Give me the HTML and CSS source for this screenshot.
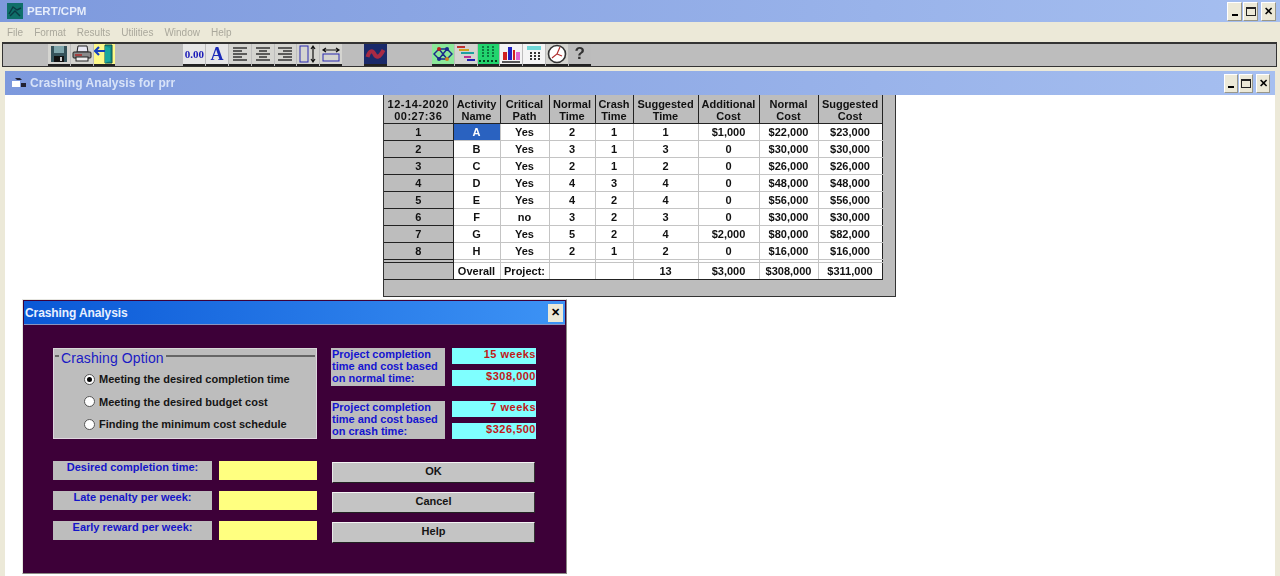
FILE: index.html
```html
<!DOCTYPE html>
<html lang="en">
<head>
  <meta charset="UTF-8">
  <title>PERT/CPM</title>
  <link rel="stylesheet" href="styles.css">
</head>
<body>

  <div class="app-title">
    <svg class="app-icon" viewBox="0 0 16 16"><rect width="16" height="16" fill="#0f6f6a"/><path d="M2 11 6 4l4 3 4-2M3 13l5-5 5 5" fill="none" stroke="#0a3a44" stroke-width="1.4"/></svg>
    <span class="app-name">PERT/CPM</span>
    <div class="win-btns">
      <span class="win-btn"><i class="i-min"></i></span>
      <span class="win-btn"><i class="i-max"></i></span>
      <span class="win-btn win-close">&#10005;</span>
    </div>
  </div>

  <div class="menu">
    <span>File</span><span>Format</span><span>Results</span><span>Utilities</span><span>Window</span><span>Help</span>
  </div>

  <div class="toolbar">
    <div class="tool-group first">
      <span class="tool"><svg viewBox="0 0 20 20"><rect x="2" y="2" width="16" height="16" fill="#35525a"/><rect x="5" y="2" width="10" height="7" fill="#7fa6ac"/><rect x="5" y="12" width="10" height="6" fill="#111"/><rect x="11" y="13" width="2" height="4" fill="#ccc"/></svg></span>
      <span class="tool"><svg viewBox="0 0 20 20"><path d="M6 2h9l1 6H5z" fill="#e8e8f4" stroke="#222"/><rect x="1" y="8" width="18" height="6" rx="1" fill="#8a8a8a" stroke="#222"/><rect x="4" y="13" width="12" height="4" fill="#eee" stroke="#222"/><path d="M3 11h7" stroke="#b02020" stroke-width="1.4"/></svg></span>
      <span class="tool tool-yellow"><svg viewBox="0 0 20 20"><path d="M11 1h7v18h-7z" fill="#12908a" stroke="#0b4f4c"/><path d="M11 2l5 2v13l-5 2z" fill="#1aa79e"/><path d="M1 7h10M5 3 1 7l4 4" fill="none" stroke="#1540c0" stroke-width="2.2"/></svg></span>
    </div>
    <div class="tool-group second">
      <span class="tool tool-num">0.00</span>
      <span class="tool tool-a">A</span>
      <span class="tool"><svg viewBox="0 0 20 20"><path d="M3 4h14M3 7h9M3 10h14M3 13h9M3 16h14" stroke="#333" stroke-width="1.3"/></svg></span>
      <span class="tool"><svg viewBox="0 0 20 20"><path d="M3 4h14M6 7h8M3 10h14M6 13h8M3 16h14" stroke="#333" stroke-width="1.3"/></svg></span>
      <span class="tool"><svg viewBox="0 0 20 20"><path d="M3 4h14M8 7h9M3 10h14M8 13h9M3 16h14" stroke="#333" stroke-width="1.3"/></svg></span>
      <span class="tool"><svg viewBox="0 0 20 20"><rect x="2" y="2" width="8" height="16" fill="none" stroke="#2a2ab0"/><path d="M15 2v16M13 5l2-3 2 3M13 15l2 3 2-3" fill="none" stroke="#111" stroke-width="1.2"/></svg></span>
      <span class="tool"><svg viewBox="0 0 20 20"><rect x="2" y="10" width="16" height="7" fill="none" stroke="#2a2ab0"/><path d="M2 6h16M5 4 2 6l3 2M15 4l3 2-3 2" fill="none" stroke="#111" stroke-width="1.2"/></svg></span>
    </div>
    <div class="tool-group third">
      <span class="tool tool-dark"><svg viewBox="0 0 20 20"><rect width="20" height="20" fill="#1a2a6a"/><path d="M2 13c2-7 5-7 7-3s5 4 9-4" fill="none" stroke="#a82a44" stroke-width="4"/></svg></span>
    </div>
    <div class="tool-group fourth">
      <span class="tool tool-green"><svg viewBox="0 0 20 20"><path d="M1 10 6 5h8l5 5-5 5H6zM6 5l8 10M14 5 6 15" fill="none" stroke="#1a2a8a" stroke-width="1.4"/><circle cx="6" cy="5" r="2" fill="#c02020"/><circle cx="14" cy="15" r="2" fill="#d08020"/><circle cx="14" cy="5" r="2" fill="#1a2a8a"/><circle cx="6" cy="15" r="2" fill="#1a2a8a"/></svg></span>
      <span class="tool"><svg viewBox="0 0 20 20"><path d="M1 3h8" stroke="#c03030" stroke-width="2"/><path d="M3 6h10" stroke="#d0a020" stroke-width="2"/><path d="M5 9h13" stroke="#20a0a0" stroke-width="2"/><path d="M8 13h7" stroke="#c03090" stroke-width="2"/><path d="M11 16h8" stroke="#2020b0" stroke-width="2"/></svg></span>
      <span class="tool tool-bright"><svg viewBox="0 0 20 20"><path d="M5 2v12M10 2v12M15 2v12" stroke="#0c7a40" stroke-width="2" stroke-dasharray="2 1"/><path d="M1 17h18" stroke="#054020" stroke-width="2" stroke-dasharray="2 2"/></svg></span>
      <span class="tool tool-white"><svg viewBox="0 0 20 20"><rect x="2" y="8" width="4" height="8" fill="#d02020"/><rect x="7" y="3" width="4" height="13" fill="#2020c0"/><rect x="12" y="6" width="2" height="10" fill="#d02020"/><rect x="15" y="8" width="4" height="8" fill="#e060d0"/><path d="M1 18h18" stroke="#111" stroke-width="1.4"/></svg></span>
      <span class="tool tool-white"><svg viewBox="0 0 20 20"><rect x="3" y="2" width="14" height="4" fill="#70d8d8"/><path d="M6 9h2M10 9h2M14 9h2M6 12h2M10 12h2M14 12h2M6 15h2M10 15h2M14 15h2" stroke="#333" stroke-width="2"/></svg></span>
      <span class="tool"><svg viewBox="0 0 20 20"><circle cx="10" cy="10" r="8.5" fill="#fff" stroke="#333" stroke-width="1.6"/><path d="M5 14 10 10l3-7M10 10l5 2" fill="none" stroke="#b03030" stroke-width="1.2"/></svg></span>
      <span class="tool tool-q">?</span>
    </div>
  </div>

  <div class="child-title">
    <svg class="child-icon" viewBox="0 0 16 12"><path d="M1 4h8v6H1z" fill="#fff"/><path d="M4 1h5l2 2H6z" fill="#223"/><path d="M10 6h5v4h-5z" fill="#223"/></svg>
    <span class="child-name">Crashing Analysis for prr</span>
    <div class="win-btns child-btns">
      <span class="win-btn"><i class="i-min"></i></span>
      <span class="win-btn"><i class="i-max"></i></span>
      <span class="win-btn win-close">&#10005;</span>
    </div>
  </div>

  <div class="child-body">
    <div class="sheet">
      <table class="grid">
        <colgroup>
          <col class="c0"><col class="c1"><col class="c2"><col class="c3"><col class="c4"><col class="c5"><col class="c6"><col class="c7"><col class="c8">
        </colgroup>
        <thead>
          <tr>
            <th class="stamp">12-14-2020<br>00:27:36</th><th>Activity<br>Name</th><th>Critical<br>Path</th><th>Normal<br>Time</th><th>Crash<br>Time</th><th>Suggested<br>Time</th><th>Additional<br>Cost</th><th>Normal<br>Cost</th><th>Suggested<br>Cost</th>
          </tr>
        </thead>
        <tbody>
          <tr><th>1</th><td class="selected">A</td><td>Yes</td><td>2</td><td>1</td><td>1</td><td>$1,000</td><td>$22,000</td><td>$23,000</td></tr>
          <tr><th>2</th><td>B</td><td>Yes</td><td>3</td><td>1</td><td>3</td><td>0</td><td>$30,000</td><td>$30,000</td></tr>
          <tr><th>3</th><td>C</td><td>Yes</td><td>2</td><td>1</td><td>2</td><td>0</td><td>$26,000</td><td>$26,000</td></tr>
          <tr><th>4</th><td>D</td><td>Yes</td><td>4</td><td>3</td><td>4</td><td>0</td><td>$48,000</td><td>$48,000</td></tr>
          <tr><th>5</th><td>E</td><td>Yes</td><td>4</td><td>2</td><td>4</td><td>0</td><td>$56,000</td><td>$56,000</td></tr>
          <tr><th>6</th><td>F</td><td>no</td><td>3</td><td>2</td><td>3</td><td>0</td><td>$30,000</td><td>$30,000</td></tr>
          <tr><th>7</th><td>G</td><td>Yes</td><td>5</td><td>2</td><td>4</td><td>$2,000</td><td>$80,000</td><td>$82,000</td></tr>
          <tr><th>8</th><td>H</td><td>Yes</td><td>2</td><td>1</td><td>2</td><td>0</td><td>$16,000</td><td>$16,000</td></tr>
          <tr class="spacer"><th></th><td></td><td></td><td></td><td></td><td></td><td></td><td></td><td></td></tr>
          <tr class="total"><th></th><td>Overall</td><td>Project:</td><td></td><td></td><td>13</td><td>$3,000</td><td>$308,000</td><td>$311,000</td></tr>
        </tbody>
      </table>
    </div>
  </div>

  <div class="dialog">
    <div class="dlg-title">
      <span>Crashing Analysis</span>
      <span class="dlg-close">&#10005;</span>
    </div>
    <div class="dlg-body">
      <div class="panel">
        <fieldset class="options">
          <legend>Crashing Option</legend>
          <label class="radio"><i class="dot on"></i>Meeting the desired completion time</label>
          <label class="radio"><i class="dot"></i>Meeting the desired budget cost</label>
          <label class="radio"><i class="dot"></i>Finding the minimum cost schedule</label>
        </fieldset>
      </div>

      <div class="summary">
        <div class="sum-group">
          <div class="sum-label">Project completion time and cost based on normal time:</div>
          <div class="sum-values"><span>15 weeks</span><span>$308,000</span></div>
        </div>
        <div class="sum-group">
          <div class="sum-label">Project completion time and cost based on crash time:</div>
          <div class="sum-values"><span>7 weeks</span><span>$326,500</span></div>
        </div>
      </div>

      <div class="inputs">
        <div class="input-row"><span class="input-label">Desired completion time:</span><span class="input-box"></span></div>
        <div class="input-row"><span class="input-label">Late penalty per week:</span><span class="input-box"></span></div>
        <div class="input-row"><span class="input-label">Early reward per week:</span><span class="input-box"></span></div>
      </div>

      <div class="actions">
        <button>OK</button>
        <button>Cancel</button>
        <button>Help</button>
      </div>
    </div>
  </div>

</body>
</html>
```

FILE: styles.css
```css
* {
  box-sizing: border-box;
}

html, body {
  height: 100%;
}

body {
  margin: 0;
  height: 576px;
  overflow: hidden;
  background: #ece9d8;
  color: #000;
  font-family: "Liberation Sans", Arial, sans-serif;
  font-size: 11px;
  position: relative;
  display: flex;
  flex-direction: column;
  filter: blur(0.35px); /* the reference is a soft capture */
}

/* main window */
.app-title {
  height: 22px;
  background: linear-gradient(to right, #7d99dd, #a6bff0);
  display: flex;
  align-items: center;
  padding-left: 7px;
  flex: none;
}

.app-icon {
  width: 16px;
  height: 16px;
}

.app-name {
  margin-left: 4px;
  color: #e6edfb;
  font-size: 11.5px;
  font-weight: bold;
}

.win-btns {
  margin-left: auto;
  margin-right: 4px;
  display: flex;
  gap: 1px;
}

.win-btn {
  width: 15px;
  height: 19px;
  background: #ece9d8;
  border: 1px solid;
  border-color: #fff #99978a #99978a #fff;
  display: flex;
  align-items: center;
  justify-content: center;
  font-size: 11px;
  font-weight: bold;
  position: relative;
}

.win-close {
  margin-left: 2px;
  font-size: 11px;
}

.i-min {
  width: 6px;
  height: 2px;
  background: #000;
  margin-top: 7px;
}

.i-max {
  width: 10px;
  height: 9px;
  border: 1px solid #222;
  border-top-width: 2px;
}

.menu {
  height: 20px;
  flex: none;
  display: flex;
  align-items: center;
  gap: 11px;
  padding-left: 7px;
  color: #aaa89c;
  font-size: 10px;
}

.toolbar {
  height: 25px;
  flex: none;
  margin: 0 3px 0 2px;
  background: #bdbdbd;
  border: 1px solid #333;
  border-width: 2px 1px 1px 1px;
  display: flex;
  align-items: center;
}

.tool-group {
  display: flex;
  gap: 1px;
}

.first {
  margin-left: 45px;
}

.second {
  margin-left: 68px;
}

.third {
  margin-left: 22px;
}

.fourth {
  margin-left: 45px;
}

.tool {
  width: 21.8px;
  height: 22px;
  background: #d4d4d0;
  border-bottom: 2px solid #222;
  display: flex;
  align-items: center;
  justify-content: center;
  overflow: hidden;
}

.tool svg {
  width: 20px;
  height: 20px;
}

.tool-yellow {
  background: #fdf98a;
}

.tool-num {
  color: #1a1ab8;
  font-family: "Liberation Serif", serif;
  font-size: 11px;
  font-weight: bold;
  background: #e6e6e6;
}

.tool-a {
  color: #1a2ab8;
  font-family: "Liberation Serif", serif;
  font-size: 18px;
  font-weight: bold;
  background: #e6e6e6;
}

.tool-dark {
  width: 23px;
  background: #1a2a6a;
}

.tool-dark svg {
  width: 23px;
  height: 20px;
}

.tool-green {
  background: #8ce89a;
}

.tool-bright {
  background: #22d46e;
}

.tool-white {
  background: #f4f4f4;
}

.tool-q {
  color: #333;
  font-size: 17px;
  font-weight: bold;
  background: #bcbcbc;
}

/* child window */
.child-title {
  height: 24px;
  flex: none;
  margin: 4px 5px 0 5px;
  background: linear-gradient(to right, #7d99dd, #a6bff0);
  display: flex;
  align-items: center;
  padding-left: 6px;
}

.child-icon {
  width: 16px;
  height: 12px;
}

.child-name {
  margin-left: 3px;
  color: #d8e3f8;
  font-size: 12px;
  font-weight: bold;
  letter-spacing: .07px;
}

.child-btns {
  margin-right: 5px;
}

.child-btns .win-btn {
  width: 14px;
}

.child-body {
  flex: 1;
  margin: 0 5px;
  background: #fff;
  padding-left: 378px;
}

.sheet {
  width: 513px;
  height: 202px;
  background: #bdbdbd;
  border: 1px solid #333;
  border-top: none;
}

.grid {
  border-collapse: collapse;
  table-layout: fixed;
  width: 498px;
  background: #fff;
  font-weight: bold;
}

.c0 { width: 69px; }
.c1 { width: 47px; }
.c2 { width: 49px; }
.c3 { width: 46px; }
.c4 { width: 38px; }
.c5 { width: 65px; }
.c6 { width: 61px; }
.c7 { width: 59px; }
.c8 { width: 64px; }

.grid th,
.grid td {
  padding: 0;
  text-align: center;
  height: 17px;
  line-height: 12px;
  color: #111;
}

.grid thead th {
  height: 28px;
  padding-top: 3px;
  vertical-align: top;
  background: #bdbdbd;
  border-right: 1px solid #222;
  border-bottom: 1px solid #222;
}

.grid .stamp {
  letter-spacing: .5px;
}

.grid tbody th {
  background: #bdbdbd;
  border-bottom: 1px solid #222;
  border-right: 1px solid #222;
}

.grid td {
  border-right: 1px solid #c4c4c4;
  border-bottom: 1px solid #c4c4c4;
}

.grid td:last-child {
  border-right: 1px solid #222;
}

.grid .selected {
  background: #2a62c0;
  color: #fff;
}

.grid .spacer th,
.grid .spacer td {
  height: 3px;
  line-height: 0;
}

.grid .spacer th {
  border-top: 1px solid #222;
}

.grid .total th,
.grid .total td {
  height: 17px;
  border-bottom: 1px solid #222;
}

/* dialog, floats over the child window */
.dialog {
  position: absolute;
  left: 22px;
  top: 299px;
  width: 545px;
  height: 275px;
  background: #3d0038;
  border: 1px solid;
  border-color: #e6e6e0 #8a8a84 #8a8a84 #e6e6e0;
  padding: 1px;
  display: flex;
  flex-direction: column;
}

.dlg-title {
  height: 24px;
  flex: none;
  background: linear-gradient(to right, #0a58d6, #3d93f5);
  color: #e8f0ff;
  font-size: 12px;
  font-weight: bold;
  letter-spacing: -.1px;
  display: flex;
  align-items: center;
  justify-content: space-between;
  padding: 0 2px 0 1px;
  border-bottom: 1px solid #8a94c0;
}

.dlg-close {
  width: 15px;
  height: 18px;
  background: #ece9d8;
  color: #000;
  font-size: 11px;
  display: flex;
  align-items: center;
  justify-content: center;
}

.dlg-body {
  flex: 1;
  padding: 23px 0 0 29px;
  display: grid;
  grid-template-columns: 264px 203px;
  grid-template-rows: 91px auto;
  column-gap: 15px;
  row-gap: 22px;
  align-content: start;
}

.panel {
  background: #bdbdbd;
  border: 1px solid;
  border-color: #d8d8d8 #dcd4dc #e0d8e0 #dcd4dc;
  padding: 0 1px;
}

.options {
  margin: -3px 0 0 0;
  padding: 3px 0 0 29px;
  border: none;
  border-top: 2px solid #666;
}

.options legend {
  padding: 6px 2px 0;
  margin-left: -25px;
  color: #1a1ac4;
  font-size: 14px;
  letter-spacing: .1px;
  line-height: 13px;
}

.radio {
  display: flex;
  align-items: center;
  height: 22.5px;
  font-weight: bold;
  color: #151515;
}

.dot {
  width: 11px;
  height: 11px;
  border-radius: 50%;
  background: #fff;
  border: 1px solid #555;
  margin-right: 4px;
  display: flex;
  align-items: center;
  justify-content: center;
}

.dot.on::after {
  content: "";
  width: 5px;
  height: 5px;
  border-radius: 50%;
  background: #000;
}

.summary {
  margin-left: -1px;
  display: flex;
  flex-direction: column;
  gap: 15px;
}

.sum-group {
  display: grid;
  grid-template-columns: 114px 84px;
  column-gap: 7px;
  height: 38px;
}

.sum-label {
  background: #bdbdbd;
  color: #1414d0;
  font-weight: bold;
  line-height: 12px;
  padding-left: 1px;
}

.sum-values {
  display: flex;
  flex-direction: column;
  justify-content: space-between;
}

.sum-values span {
  height: 16px;
  background: #7fffff;
  color: #c01818;
  font-weight: bold;
  letter-spacing: .5px;
  line-height: 12px;
  text-align: right;
}

.inputs {
  display: flex;
  flex-direction: column;
  gap: 11px;
}

.input-row {
  display: flex;
  gap: 7px;
  height: 19px;
}

.input-label {
  width: 159px;
  background: #bdbdbd;
  color: #1414c8;
  font-weight: bold;
  line-height: 13px;
  text-align: center;
}

.input-box {
  width: 98px;
  background: #ffff80;
}

.actions {
  display: flex;
  flex-direction: column;
  gap: 9px;
  padding-top: 1px;
}

.actions button {
  height: 21px;
  padding: 0 0 3px;
  background: #c4c4c4;
  border: 1px solid;
  border-color: #f4f4f4 #333 #222 #e8e8e8;
  color: #151515;
  font-family: inherit;
  font-size: 11px;
  font-weight: bold;
}
```
